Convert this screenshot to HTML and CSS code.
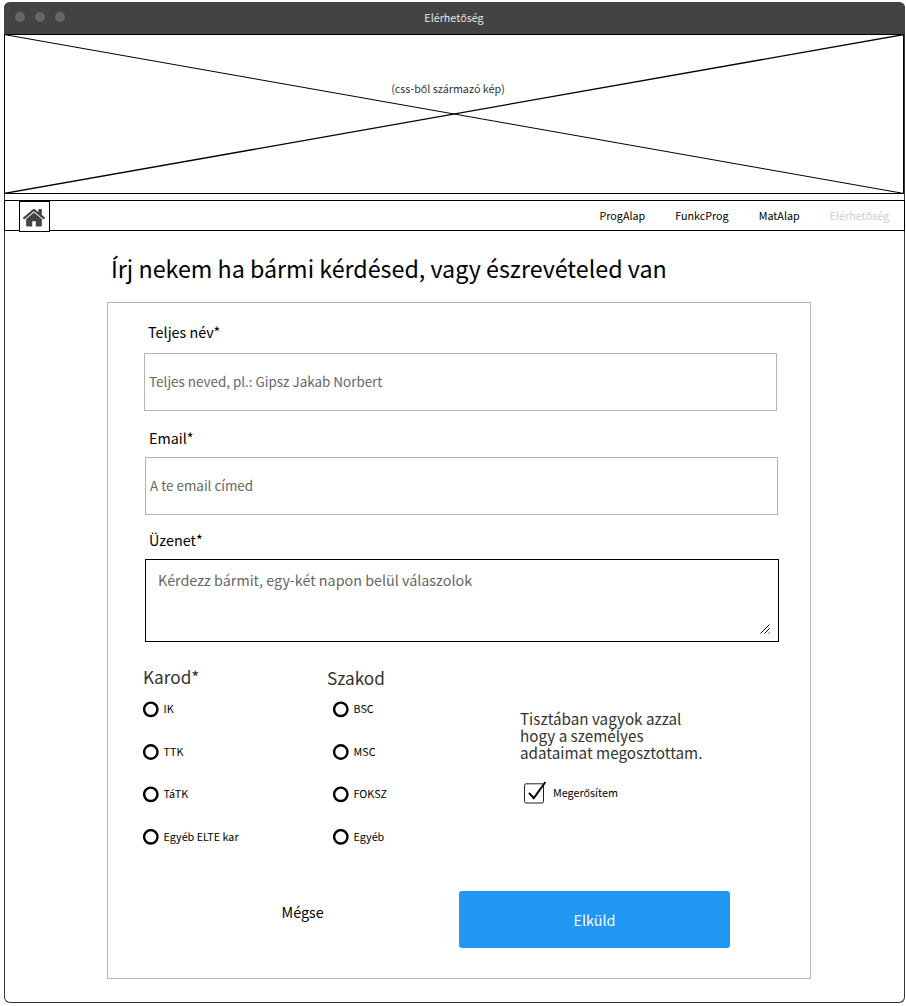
FILE: index.html
```html
<!DOCTYPE html>
<html lang="hu">
<head>
<meta charset="utf-8">
<title>Elérhetőség</title>
<link rel="stylesheet" href="styles.css">
</head>
<body>
<div class="window">
  <header class="titlebar">
    <div class="dots"><i class="dot"></i><i class="dot"></i><i class="dot"></i></div>
    <div class="window-title">Elérhetőség</div>
  </header>
  <div class="banner">
    <svg class="banner-cross" viewBox="0 0 900 160" width="900" height="160">
      <line x1="0" y1="0.5" x2="900" y2="159.5" stroke="#000" stroke-width="1"/>
      <line x1="0" y1="159.5" x2="900" y2="0.5" stroke="#000" stroke-width="1.3"/>
    </svg>
    <span class="banner-text">(css-ből származó kép)</span>
  </div>
  <nav class="nav">
    <a class="home">
      <svg viewBox="25 253 1614 1283" width="22" height="17.5"><path fill="#434343" d="M1408 992v480q0 26-19 45t-45 19h-384v-384h-256v384h-384q-26 0-45-19t-19-45v-480q0-1 .5-3t.5-3l575-474 575 474q1 2 1 6zm223-69l-62 74q-8 9-21 11h-3q-13 0-21-7l-692-577-692 577q-12 8-24 7-13-2-21-11l-62-74q-8-10-7-23.5t11-21.5l719-599q32-26 76-26t76 26l244 204v-195q0-14 9-23t23-9h192q14 0 23 9t9 23v408l219 182q10 8 11 21.5t-7 23.5z"/></svg>
    </a>
    <div class="links">
      <a>ProgAlap</a><a>FunkcProg</a><a>MatAlap</a><a class="current">Elérhetőség</a>
    </div>
  </nav>
  <h1 class="heading">Írj nekem ha bármi kérdésed, vagy észrevételed van</h1>
  <div class="form">
    <div class="field name">
      <div class="label">Teljes név*</div>
      <div class="input">Teljes neved, pl.: Gipsz Jakab Norbert</div>
    </div>
    <div class="field email">
      <div class="label">Email*</div>
      <div class="input">A te email címed</div>
    </div>
    <div class="field message">
      <div class="label">Üzenet*</div>
      <div class="textarea"><span>Kérdezz bármit, egy-két napon belül válaszolok</span>
        <svg class="grip" viewBox="0 0 10 10" width="10" height="10"><path d="M0.5 9.5L9.5 0.5M4.5 9.5L9.5 4.5M8.5 9.5L9.5 8.5" stroke="#000" stroke-width="1" fill="none"/></svg>
      </div>
    </div>
    <div class="options">
      <div class="group faculty">
        <div class="group-title">Karod*</div>
        <div class="radio"><svg class="ring" viewBox="0 0 17 17"><circle cx="7.8" cy="8.3" r="6.7"/></svg><span>IK</span></div>
        <div class="radio"><svg class="ring" viewBox="0 0 17 17"><circle cx="7.8" cy="8" r="6.7"/></svg><span>TTK</span></div>
        <div class="radio"><svg class="ring" viewBox="0 0 17 17"><circle cx="7.8" cy="8.3" r="6.7"/></svg><span>TáTK</span></div>
        <div class="radio"><svg class="ring" viewBox="0 0 17 17"><circle cx="7.8" cy="7.8" r="6.7"/></svg><span>Egyéb ELTE kar</span></div>
      </div>
      <div class="group major">
        <div class="group-title">Szakod</div>
        <div class="radio"><svg class="ring" viewBox="0 0 17 17"><circle cx="7.8" cy="8.3" r="6.7"/></svg><span>BSC</span></div>
        <div class="radio"><svg class="ring" viewBox="0 0 17 17"><circle cx="7.8" cy="8" r="6.7"/></svg><span>MSC</span></div>
        <div class="radio"><svg class="ring" viewBox="0 0 17 17"><circle cx="7.8" cy="8.3" r="6.7"/></svg><span>FOKSZ</span></div>
        <div class="radio"><svg class="ring" viewBox="0 0 17 17"><circle cx="7.8" cy="7.8" r="6.7"/></svg><span>Egyéb</span></div>
      </div>
      <div class="consent">
        <p>Tisztában vagyok azzal<br>hogy a személyes<br>adataimat megosztottam.</p>
        <div class="check">
          <svg viewBox="0 0 24 24" width="24" height="24"><rect x="1.5" y="3.8" width="19" height="19.2" rx="1.5" fill="#fff" stroke="#222"/><path d="M6 12.8L10.8 18.2L22.4 2" fill="none" stroke="#000" stroke-width="2"/></svg>
          <span>Megerősítem</span>
        </div>
      </div>
    </div>
    <div class="actions">
      <div class="cancel">Mégse</div>
      <div class="submit">Elküld</div>
    </div>
  </div>
</div>
</body>
</html>
```
FILE: styles.css
```css
* { box-sizing: border-box; }
body { margin: 0; background: #fff; color: #000; font-family: "Noto Sans CJK JP", "Open Sans", sans-serif; font-size: 10.75px; white-space: nowrap; }
.window { margin: 2px 0 0 4px; width: 901px; height: 1001px; border: 1px solid #333; border-top: 0; border-radius: 6px; display: flex; flex-direction: column; }
.titlebar { height: 32px; margin: 0 -1px; background: #434343; border-radius: 6px 6px 0 0; display: grid; grid-template-columns: 1fr auto 1fr; color: #e6e6e6; }
.dots { display: flex; gap: 10px; padding: 10px 0 0 11px; }
.dot { width: 10px; height: 10px; border-radius: 50%; background: #666; }
.window-title { line-height: 32px; margin-right: 1px; }
.banner { width: 900px; height: 160px; margin-left: -1px; border: 1px solid #000; position: relative; text-align: center; }
.banner-cross { position: absolute; left: -1px; top: -1px; }
.banner-text { position: relative; display: block; color: #333; line-height: 20px; margin: 44px 12px 0 0; }
.nav { width: 901px; height: 31px; margin: 6px 0 0 -1px; border: 1px solid #000; display: flex; justify-content: space-between; }
.home { width: 31px; height: 31px; margin-left: 14px; border: 1px solid #000; background: #fff; display: flex; justify-content: flex-start; padding: 7px 0 0 3px; }
.links { display: flex; gap: 30px; padding-right: 15px; line-height: 30px; }
.current { color: #ccc; }
.heading { margin: 17px 0 0 106px; font-size: 23.27px; line-height: 40px; font-weight: 400; }
.form { margin: 14px 0 0 102px; width: 704px; height: 677px; border: 1px solid #b5b5b5; }
.label { font-size: 14.35px; line-height: 20px; padding-left: 4px; margin-bottom: 9px; }
.input { width: 633px; height: 58px; border: 1px solid #b5b5b5; color: #666; font-size: 13.43px; line-height: 55px; padding-left: 4px; }
.name { margin: 19px 0 0 36px; }
.email, .message { margin-left: 37px; }
.name .label { margin-bottom: 11px; }
.email { margin-top: 17px; }
.message { margin-top: 15px; }
.textarea { width: 634px; height: 83px; border: 1px solid #000; padding: 10px 8px 7px 12px; display: flex; justify-content: space-between; color: #666; font-size: 14.33px; line-height: 20px; }
.grip { align-self: flex-end; }
.options { display: grid; grid-template-columns: 184px 193px 1fr; height: 249px; margin-left: 35px; align-items: start; }
.group { display: flex; flex-direction: column; gap: 25.6px; padding-top: 23px; }
.group-title { font-size: 17.2px; line-height: 24px; margin-bottom: -13.6px; color: #333; }
.radio { display: flex; gap: 3.5px; height: 17px; line-height: 15px; }
.ring { width: 17px; height: 17px; fill: none; stroke: #000; stroke-width: 2.4px; }
.major { padding-top: 24px; }
.major .group-title { margin-bottom: -14.6px; }
.major .radio { margin-left: 6px; }
.consent { padding-top: 68px; }
.consent p { margin: 0; font-size: 15.22px; line-height: 17px; color: #333; }
.check { display: flex; gap: 6px; margin: 19px 0 0 3px; line-height: 26px; }
.actions { display: flex; }
.cancel { font-size: 14.35px; line-height: 20px; margin: 11px 0 0 173.5px; width: 177.5px; }
.submit { width: 271px; height: 57px; border-radius: 3px; background: #2196f3; color: #fff; font-size: 14.35px; line-height: 57px; text-align: center; }
```
